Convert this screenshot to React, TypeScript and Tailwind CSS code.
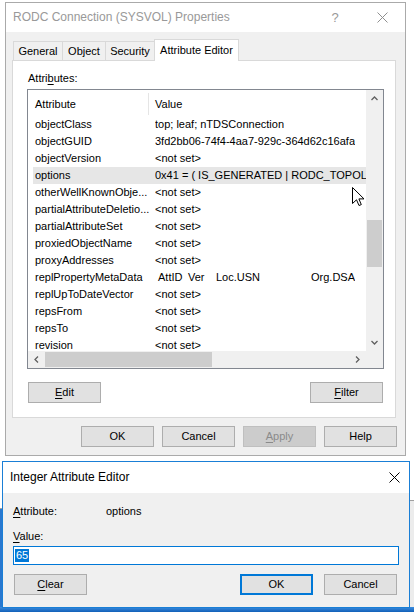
import React from "react";

type Row = { name: string; value: React.ReactNode; selected?: boolean };

const rows: Row[] = [
  { name: "objectClass", value: "top; leaf; nTDSConnection" },
  { name: "objectGUID", value: "3fd2bb06-74f4-4aa7-929c-364d62c16afa" },
  { name: "objectVersion", value: "<not set>" },
  { name: "options", value: "0x41 = ( IS_GENERATED | RODC_TOPOLC" , selected: true },
  { name: "otherWellKnownObje...", value: "<not set>" },
  { name: "partialAttributeDeletio...", value: "<not set>" },
  { name: "partialAttributeSet", value: "<not set>" },
  { name: "proxiedObjectName", value: "<not set>" },
  { name: "proxyAddresses", value: "<not set>" },
  {
    name: "replPropertyMetaData",
    value: (
      <span className="flex pl-[3px]">
        <span className="w-[30px]">AttID</span>
        <span className="w-[28px]">Ver</span>
        <span className="w-[95px]">Loc.USN</span>
        <span>Org.DSA</span>
      </span>
    ),
  },
  { name: "replUpToDateVector", value: "<not set>" },
  { name: "repsFrom", value: "<not set>" },
  { name: "repsTo", value: "<not set>" },
  { name: "revision", value: "<not set>" },
];

function Chevron({ dir }: { dir: "up" | "down" | "left" | "right" }) {
  const d = {
    up: "M1.5 6 L4.5 3 L7.5 6",
    down: "M1.5 3 L4.5 6 L7.5 3",
    left: "M6 1.5 L3 4.5 L6 7.5",
    right: "M3 1.5 L6 4.5 L3 7.5",
  }[dir];
  return (
    <svg width="9" height="9" viewBox="0 0 9 9">
      <path d={d} fill="none" stroke="#606060" strokeWidth="1.3" />
    </svg>
  );
}

function CloseX({ color }: { color: string }) {
  return (
    <svg width="11" height="11" viewBox="0 0 11 11">
      <path d="M0.5 0.5 L10.5 10.5 M10.5 0.5 L0.5 10.5" stroke={color} strokeWidth="1" />
    </svg>
  );
}

function Btn({ children, kind = "normal" }: { children: React.ReactNode; kind?: "normal" | "disabled" | "default" }) {
  if (kind === "disabled") {
    return (
      <div className="h-[21px] w-[73px] flex items-center justify-center border border-[#bfbfbf] bg-[#cccccc] text-[#8a8a8a]">
        {children}
      </div>
    );
  }
  if (kind === "default") {
    return (
      <div className="h-[21px] w-[73px] flex items-center justify-center border-2 border-[#0078d7] bg-[#e1e1e1]">
        {children}
      </div>
    );
  }
  return (
    <div className="h-[21px] w-[73px] flex items-center justify-center border border-[#adadad] bg-[#e1e1e1]">
      {children}
    </div>
  );
}

function AttributeList() {
  return (
    <div className="w-[357px] h-[280px] border border-[#828790] bg-white grid grid-cols-[1fr_17px] grid-rows-[1fr_17px]">
      <div className="overflow-hidden">
        <div className="h-[26px] flex items-center pt-[2px]">
          <span className="w-[120px] pl-[7px]">Attribute</span>
          <span className="w-px h-[22px] bg-[#e5e5e5]" />
          <span className="pl-[6px]">Value</span>
        </div>
        {rows.map((r) => (
          <div
            key={r.name}
            className={
              r.selected
                ? "h-[17px] ml-[5px] flex items-center whitespace-nowrap bg-[#e6e6e6]"
                : "h-[17px] ml-[5px] flex items-center whitespace-nowrap"
            }
          >
            <span className="w-[122px] shrink-0 pl-[2px]">{r.name}</span>
            <span className="overflow-hidden">{r.value}</span>
          </div>
        ))}
      </div>
      <div className="bg-[#f0f0f0] flex flex-col">
        <div className="h-[17px] flex items-center justify-center">
          <Chevron dir="up" />
        </div>
        <div className="flex-1">
          <div className="mt-[113px] mx-[1px] h-[47px] bg-[#cdcdcd]" />
        </div>
        <div className="h-[17px] flex items-center justify-center">
          <Chevron dir="down" />
        </div>
      </div>
      <div className="bg-[#f0f0f0] flex items-center">
        <div className="w-[17px] flex items-center justify-center">
          <Chevron dir="left" />
        </div>
        <div className="flex-1 h-full py-[1px]">
          <div className="h-full w-[167px] bg-[#cdcdcd]" />
        </div>
        <div className="w-[17px] flex items-center justify-center">
          <Chevron dir="right" />
        </div>
      </div>
      <div className="bg-[#f0f0f0]" />
    </div>
  );
}

function Cursor() {
  return (
    <svg width="13" height="20" viewBox="0 0 13 20">
      <path
        d="M0.5 0.5 L0.5 16.5 L4.5 12.8 L7 18.5 L9.3 17.6 L6.9 11.9 L12 11.9 Z"
        fill="#ffffff"
        stroke="#000000"
        strokeWidth="1"
        strokeLinejoin="miter"
      />
    </svg>
  );
}

export default function App() {
  return (
    <div className="relative w-[414px] h-[612px] overflow-hidden bg-white font-['Liberation_Sans',Arial,sans-serif] text-[11px] leading-[13px] text-black">
      {/* window behind: only the foot of its text line peeks out above the dialog */}
      <div className="absolute left-0 top-0 w-full h-[2px] overflow-hidden">
        <div className="relative -top-[10px] flex whitespace-nowrap text-[#222]">
          <span className="ml-[135px]">nTDSConnection   RODC Connection</span>
          <span className="ml-[40px]">Connection</span>
        </div>
      </div>

      {/* desktop pieces */}
      <div className="absolute left-0 top-[508px] w-[3px] h-[104px] border-t border-[#a0a0a0] bg-[#2a78cf]" />
      <div className="absolute right-0 top-[500px] w-[5px] h-[107px] border-t border-[#a0a0a0] bg-[#ececec]" />
      <div className="absolute left-0 top-[607px] w-full h-[5px] bg-gradient-to-b from-[#3a8de0] to-[#1160b8]" />

      {/* Properties dialog (inactive) */}
      <div className="absolute left-[5px] top-[2px] w-[401px] h-[454px] border border-[#aaaaaa] bg-[#f0f0f0] flex flex-col">
        <div className="h-[29px] bg-white flex items-center pl-[7px] text-[12px] text-[#999999]">
          <span className="flex-1">RODC Connection (SYSVOL) Properties</span>
          <span className="w-[10px] text-center text-[13px] mr-[37px]">?</span>
          <span className="mr-[17px] flex">
            <CloseX color="#8f8f8f" />
          </span>
        </div>
        <div className="flex-1 pt-[7px] pl-[6px] pr-[9px]">
          <div className="flex items-end h-[21px] pl-[1px]">
            <div className="w-[50px] h-[19px] border border-b-0 border-[#d9d9d9] bg-[#f0f0f0] flex items-center justify-center">
              General
            </div>
            <div className="-ml-px w-[44px] h-[19px] border border-b-0 border-[#d9d9d9] bg-[#f0f0f0] flex items-center justify-center">
              Object
            </div>
            <div className="-ml-px w-[50px] h-[19px] border border-b-0 border-[#d9d9d9] bg-[#f0f0f0] flex items-center justify-center">
              Security
            </div>
            <div className="relative z-10 -ml-px -mb-px w-[85px] h-[22px] border border-b-0 border-[#d9d9d9] bg-white flex items-center justify-center pb-[1px]">
              Attribute Editor
            </div>
          </div>
          <div className="h-[358px] border border-[#d9d9d9] bg-white pt-[11px] pl-[14px] pr-[11px]">
            <div className="pl-px">
              Attri<span className="underline underline-offset-2">b</span>utes:
            </div>
            <div className="mt-[4px]">
              <AttributeList />
            </div>
            <div className="mt-[13px] flex justify-between px-px">
              <Btn>
                <span className="underline underline-offset-2">E</span>dit
              </Btn>
              <Btn>
                <span className="underline underline-offset-2">F</span>ilter
              </Btn>
            </div>
          </div>
          <div className="mt-[8px] flex justify-end gap-[8px] -mr-px">
            <Btn>OK</Btn>
            <Btn>Cancel</Btn>
            <Btn kind="disabled">
              <span className="underline underline-offset-2">A</span>pply
            </Btn>
            <Btn>Help</Btn>
          </div>
        </div>
      </div>

      {/* mouse pointer over the list */}
      <div className="absolute left-[352px] top-[187px]">
        <Cursor />
      </div>

      {/* Integer Attribute Editor (active) */}
      <div className="absolute left-[2px] top-[461px] w-[408px] h-[147px] border border-[#1a7fd6] bg-[#f0f0f0] flex flex-col">
        <div className="h-[31px] bg-white flex items-center pl-[7px] text-[12px]">
          <span className="flex-1">Integer Attribute Editor</span>
          <span className="mr-[9px] flex">
            <CloseX color="#000000" />
          </span>
        </div>
        <div className="flex-1 pt-[12px] pl-[10px] pr-[10px]">
          <div className="flex">
            <span className="w-[93px]">
              <span className="underline underline-offset-2">A</span>ttribute:
            </span>
            <span>options</span>
          </div>
          <div className="mt-[12px]">
            <span className="underline underline-offset-2">V</span>alue:
          </div>
          <div className="mt-[3px] h-[19px] border border-[#0078d7] bg-white flex items-center pl-px">
            <span className="bg-[#0078d7] text-white px-px">65</span>
          </div>
          <div className="mt-[9px] flex items-center">
            <div className="ml-px">
              <Btn>
                <span className="underline underline-offset-2">C</span>lear
              </Btn>
            </div>
            <div className="flex-1" />
            <Btn kind="default">OK</Btn>
            <div className="ml-[11px] mr-[2px]">
              <Btn>Cancel</Btn>
            </div>
          </div>
        </div>
      </div>
    </div>
  );
}
